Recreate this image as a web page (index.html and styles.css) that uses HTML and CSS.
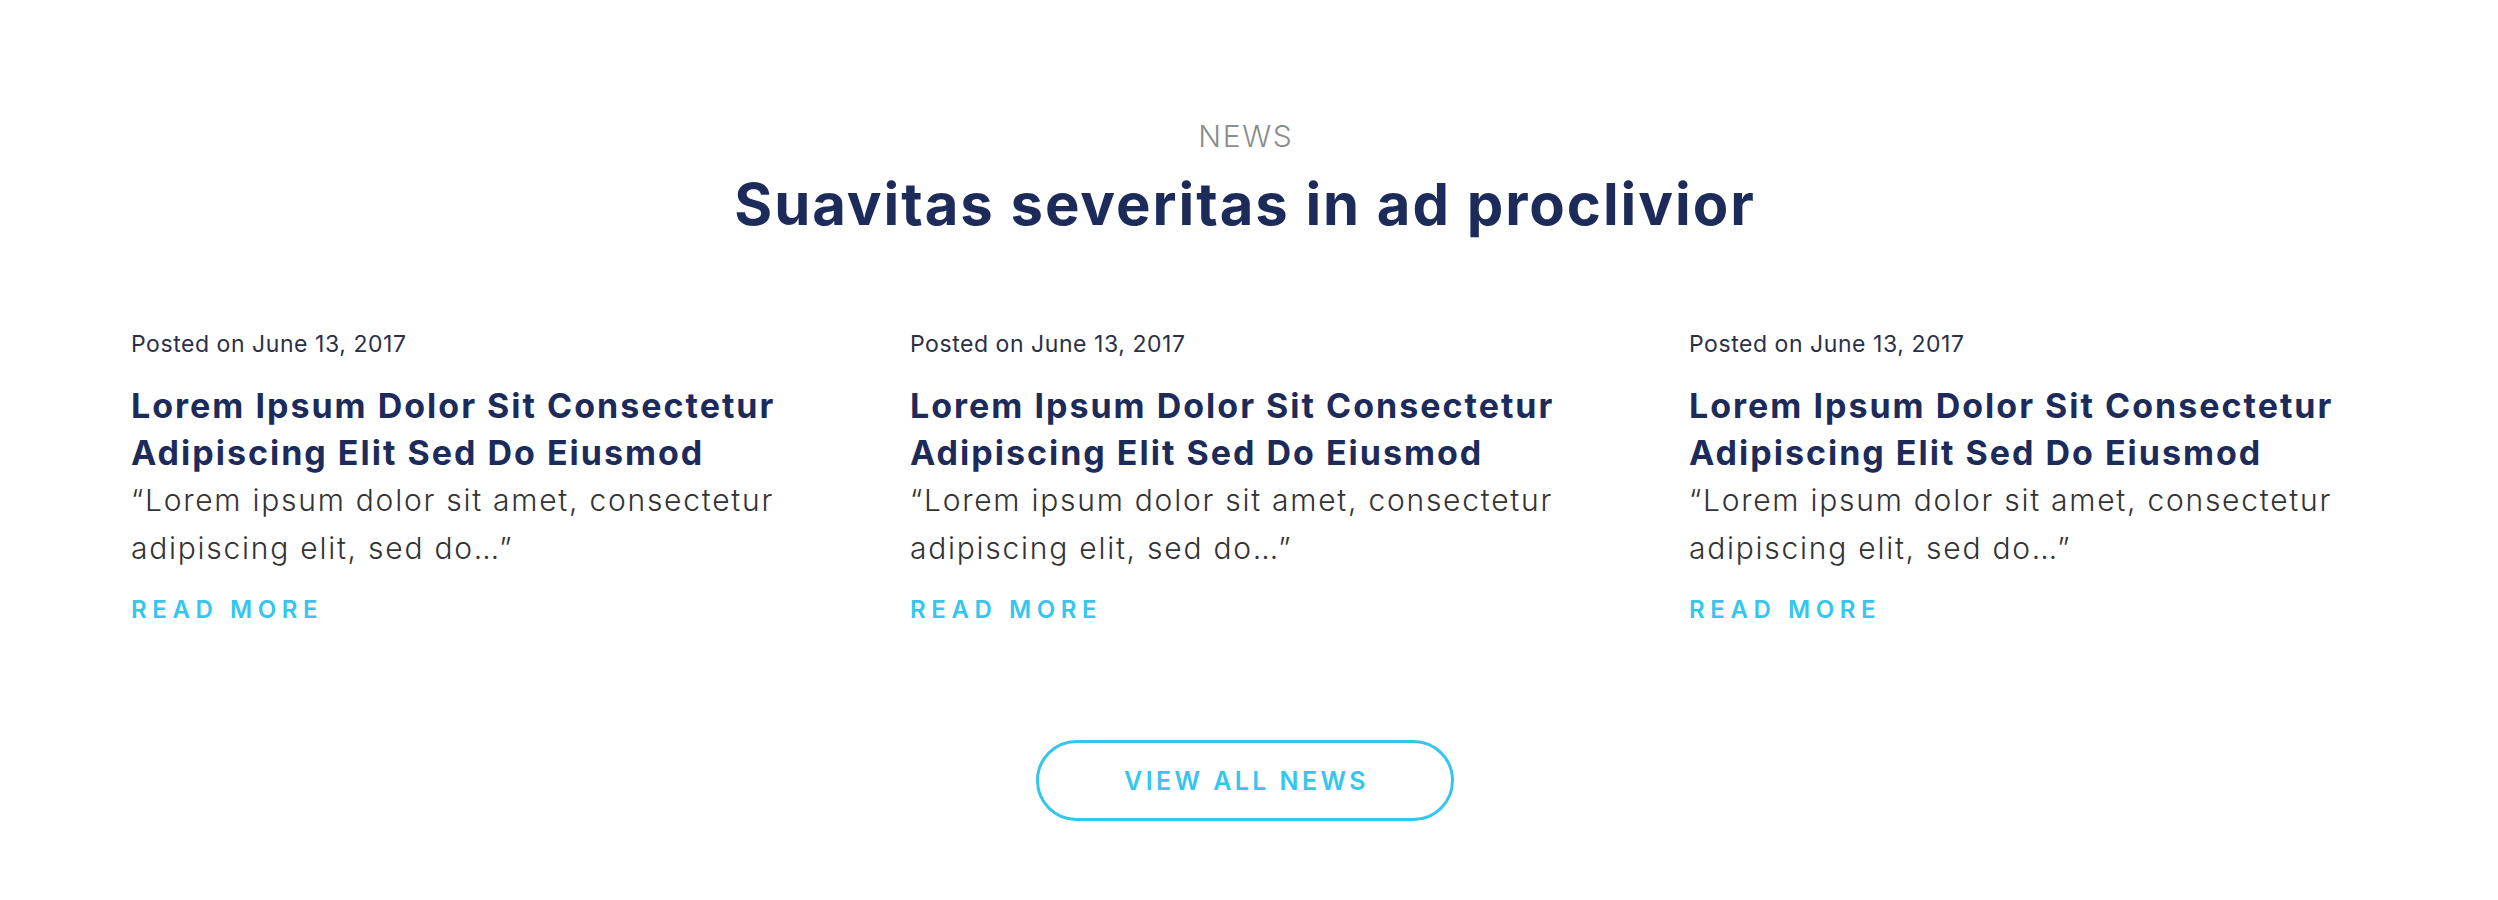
FILE: index.html
```html
<!DOCTYPE html>
<html lang="en">
<head>
<meta charset="utf-8">
<title>News</title>
<link rel="stylesheet" href="styles.css">
</head>
<body>
<section class="news">
  <div class="eyebrow">NEWS</div>
  <h2 class="heading">Suavitas severitas in ad proclivior</h2>
  <div class="grid">
    <article class="card">
      <div class="meta">Posted on June 13, 2017</div>
      <h3 class="card-title">Lorem Ipsum Dolor Sit Consectetur Adipiscing Elit Sed Do Eiusmod</h3>
      <p class="excerpt">“Lorem ipsum dolor sit amet, consectetur adipiscing elit, sed do…”</p>
      <a class="more" href="#">READ MORE</a>
    </article>
    <article class="card">
      <div class="meta">Posted on June 13, 2017</div>
      <h3 class="card-title">Lorem Ipsum Dolor Sit Consectetur Adipiscing Elit Sed Do Eiusmod</h3>
      <p class="excerpt">“Lorem ipsum dolor sit amet, consectetur adipiscing elit, sed do…”</p>
      <a class="more" href="#">READ MORE</a>
    </article>
    <article class="card">
      <div class="meta">Posted on June 13, 2017</div>
      <h3 class="card-title">Lorem Ipsum Dolor Sit Consectetur Adipiscing Elit Sed Do Eiusmod</h3>
      <p class="excerpt">“Lorem ipsum dolor sit amet, consectetur adipiscing elit, sed do…”</p>
      <a class="more" href="#">READ MORE</a>
    </article>
  </div>
  <div class="actions">
    <a class="btn" href="#">VIEW ALL NEWS</a>
  </div>
</section>
</body>
</html>
```

FILE: styles.css
```css
html, body {
  margin: 0;
  padding: 0;
  background: #ffffff;
}

body {
  font-family: Inter, "Noto Sans", sans-serif;
}

.news {
  padding: 118px 139px 0 131px;
  display: flex;
  flex-direction: column;
  align-items: center;
}

.eyebrow {
  font-size: 30px;
  line-height: 36px;
  font-weight: 300;
  color: #8c8c8c;
  letter-spacing: 1.6px;
  padding-left: 1.6px;
}

.heading {
  margin: 15px 0 0;
  font-size: 58px;
  line-height: 70px;
  font-weight: 700;
  letter-spacing: 1.95px;
  color: #1c2b5a;
}

.grid {
  align-self: stretch;
  margin-top: 90px;
  display: grid;
  grid-template-columns: repeat(3, 1fr);
  column-gap: 109px;
}

.card {
  display: flex;
  flex-direction: column;
  align-items: flex-start;
}

.meta {
  font-size: 23px;
  line-height: 30px;
  font-weight: 400;
  letter-spacing: 0.55px;
  color: #2b3046;
}

.card-title {
  margin: 23px 0 0;
  font-size: 34px;
  line-height: 47px;
  font-weight: 700;
  letter-spacing: 2px;
  color: #1c2b5a;
}

.excerpt {
  margin: 0;
  font-size: 30px;
  line-height: 48px;
  font-weight: 300;
  letter-spacing: 1.75px;
  color: #333333;
}

.more {
  margin-top: 23px;
  font-size: 24px;
  line-height: 30px;
  font-weight: 600;
  letter-spacing: 5.6px;
  color: #35c6ee;
  text-decoration: none;
}

.actions {
  margin-top: 115px;
  display: flex;
  justify-content: center;
}

.btn {
  box-sizing: border-box;
  width: 418px;
  height: 81px;
  border: 3px solid #35c6ee;
  border-radius: 41px;
  display: flex;
  align-items: center;
  justify-content: center;
  padding-left: 3px;
  font-size: 25px;
  font-weight: 600;
  letter-spacing: 3.4px;
  color: #35c6ee;
  text-decoration: none;
}
```
